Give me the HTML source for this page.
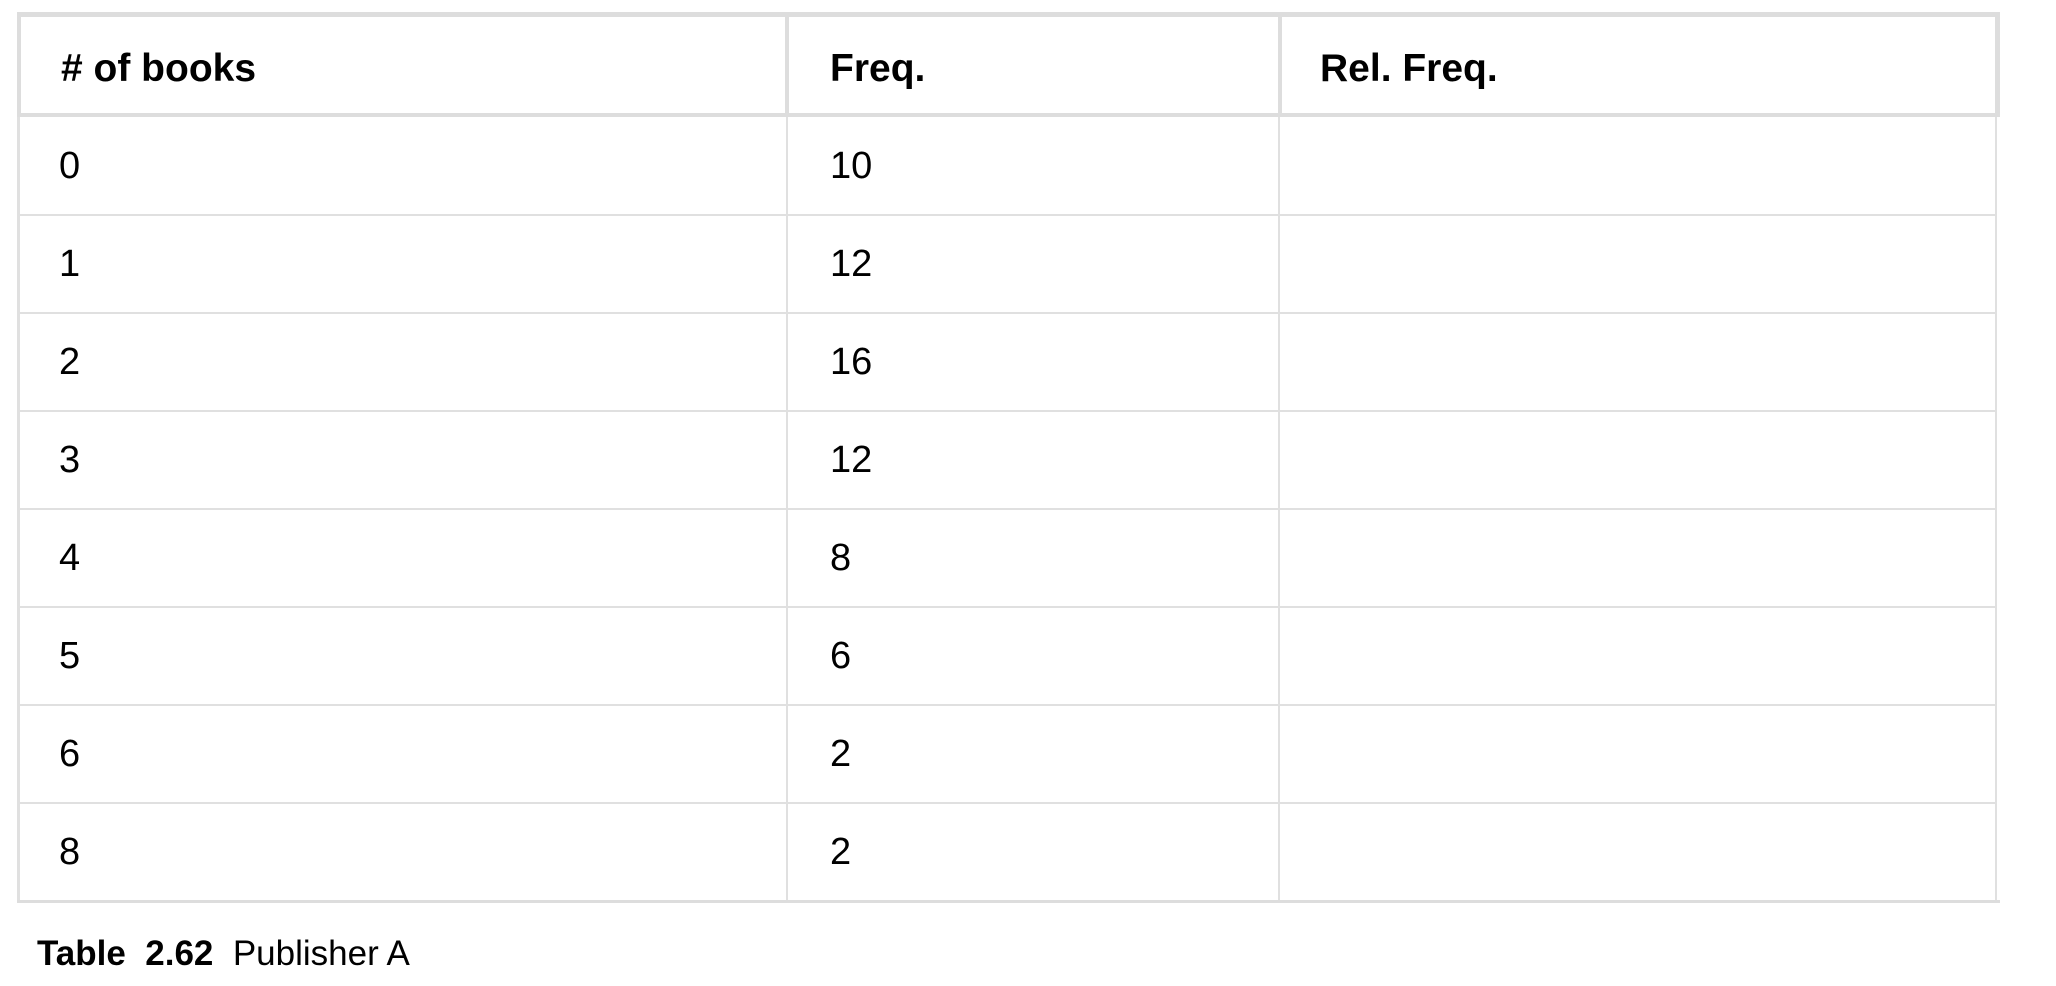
<!DOCTYPE html>
<html><head><meta charset="utf-8"><style>
html,body{margin:0;padding:0;background:#fff;width:2056px;height:986px;overflow:hidden;font-family:"Liberation Sans",Arial,sans-serif;color:#000}
.a{position:absolute}
.h{background:#ddd}
.l{background:#e0e0e0}
.t{position:absolute;font-size:38px;line-height:40px}
.b{font-weight:bold;font-size:39px}
</style></head><body>
<div class="a h" style="left:17px;top:12px;width:1983px;height:5px"></div>
<div class="a h" style="left:17px;top:113px;width:1983px;height:4px"></div>
<div class="a h" style="left:17px;top:12px;width:4px;height:105px"></div>
<div class="a h" style="left:785px;top:12px;width:4px;height:105px"></div>
<div class="a h" style="left:1278px;top:12px;width:4px;height:105px"></div>
<div class="a h" style="left:1995px;top:12px;width:5px;height:105px"></div>
<div class="a l" style="left:17px;top:117px;width:3px;height:786px"></div>
<div class="a l" style="left:786px;top:117px;width:2px;height:786px"></div>
<div class="a l" style="left:1278px;top:117px;width:2px;height:786px"></div>
<div class="a l" style="left:1995px;top:117px;width:2px;height:786px"></div>
<div class="a l" style="left:17px;top:214px;width:1980px;height:2px"></div>
<div class="a l" style="left:17px;top:312px;width:1980px;height:2px"></div>
<div class="a l" style="left:17px;top:410px;width:1980px;height:2px"></div>
<div class="a l" style="left:17px;top:508px;width:1980px;height:2px"></div>
<div class="a l" style="left:17px;top:606px;width:1980px;height:2px"></div>
<div class="a l" style="left:17px;top:704px;width:1980px;height:2px"></div>
<div class="a l" style="left:17px;top:802px;width:1980px;height:2px"></div>
<div class="a h" style="left:17px;top:900px;width:1983px;height:3px"></div>

<div class="t b" style="left:61px;top:49px"># of books</div>
<div class="t b" style="left:830px;top:49px">Freq.</div>
<div class="t b" style="left:1320px;top:49px">Rel. Freq.</div>

<div class="t" style="left:59px;top:146px">0</div><div class="t" style="left:830px;top:146px">10</div>
<div class="t" style="left:59px;top:244px">1</div><div class="t" style="left:830px;top:244px">12</div>
<div class="t" style="left:59px;top:342px">2</div><div class="t" style="left:830px;top:342px">16</div>
<div class="t" style="left:59px;top:440px">3</div><div class="t" style="left:830px;top:440px">12</div>
<div class="t" style="left:59px;top:538px">4</div><div class="t" style="left:830px;top:538px">8</div>
<div class="t" style="left:59px;top:636px">5</div><div class="t" style="left:830px;top:636px">6</div>
<div class="t" style="left:59px;top:734px">6</div><div class="t" style="left:830px;top:734px">2</div>
<div class="t" style="left:59px;top:832px">8</div><div class="t" style="left:830px;top:832px">2</div>

<div class="a" style="left:37px;top:935px;font-size:35px;line-height:38px;white-space:pre"><b>Table  2.62</b>  Publisher A</div>
</body></html>
